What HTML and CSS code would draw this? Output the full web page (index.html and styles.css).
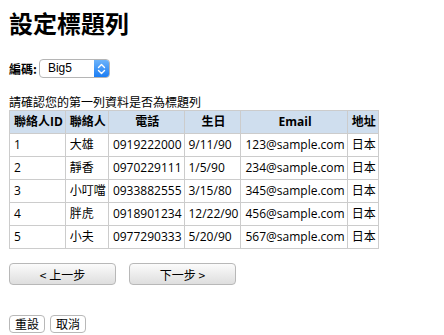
FILE: index.html
```html
<!DOCTYPE html>
<html lang="zh-Hant">
<head>
<meta charset="utf-8">
<link rel="stylesheet" href="styles.css">
</head>
<body>
<h1 class="title">設定標題列</h1>
<div class="enc-row">
  <span class="enc-label">編碼:</span>
  <div class="select">
    <span class="select-value">Big5</span>
    <span class="select-arrow">
      <svg width="9" height="12" viewBox="0 0 9 12"><path d="M1.5 4.5 L4.5 1.5 L7.5 4.5 M1.5 7.5 L4.5 10.5 L7.5 7.5" fill="none" stroke="#fff" stroke-width="1.4" stroke-linecap="round" stroke-linejoin="round"/></svg>
    </span>
  </div>
</div>
<p class="prompt">請確認您的第一列資料是否為標題列</p>
<table class="grid">
  <thead>
    <tr><th>聯絡人ID</th><th>聯絡人</th><th class="c">電話</th><th class="c">生日</th><th class="c">Email</th><th>地址</th></tr>
  </thead>
  <tbody>
    <tr><td>1</td><td>大雄</td><td>0919222000</td><td>9/11/90</td><td>123@sample.com</td><td>日本</td></tr>
    <tr><td>2</td><td>靜香</td><td>0970229111</td><td>1/5/90</td><td>234@sample.com</td><td>日本</td></tr>
    <tr><td>3</td><td>小叮噹</td><td>0933882555</td><td>3/15/80</td><td>345@sample.com</td><td>日本</td></tr>
    <tr><td>4</td><td>胖虎</td><td>0918901234</td><td>12/22/90</td><td>456@sample.com</td><td>日本</td></tr>
    <tr><td>5</td><td>小夫</td><td>0977290333</td><td>5/20/90</td><td>567@sample.com</td><td>日本</td></tr>
  </tbody>
</table>
<div class="nav">
  <button class="btn-big">&lt; 上一步</button>
  <button class="btn-big">下一步 &gt;</button>
</div>
<div class="actions">
  <button class="btn-small">重設</button>
  <button class="btn-small">取消</button>
</div>
</body>
</html>
```
FILE: styles.css
```css
html, body {
  margin: 0;
  background: #fff;
}
body {
  padding: 9px 9px 0 9px;
  font-family: "Noto Sans CJK TC", sans-serif;
  color: #000;
}
.title {
  margin: 0;
  font-size: 24px;
  line-height: 28px;
  font-weight: bold;
}
.enc-row {
  display: flex;
  align-items: center;
  gap: 2px;
  margin-top: 22px;
  height: 19px;
}
.enc-label {
  font-size: 12px;
  font-weight: bold;
}
.select {
  display: flex;
  align-items: stretch;
  width: 71px;
  height: 19px;
  box-sizing: border-box;
  border: 1px solid #b5b5b5;
  border-radius: 4px;
  overflow: hidden;
  background: #fff;
}
.select-value {
  flex: 1;
  font-family: "Liberation Sans", Arial, sans-serif;
  font-size: 12px;
  line-height: 17px;
  padding-left: 8px;
}
.select-arrow {
  width: 15px;
  display: flex;
  align-items: center;
  justify-content: center;
  background: linear-gradient(#6cb3fa, #1b7df4);
}
.prompt {
  margin: 17px 0 0 0;
  font-size: 12px;
  line-height: 14px;
}
.grid {
  border-collapse: collapse;
  margin-top: 1px;
  font-family: "Open Sans", "Noto Sans CJK TC", sans-serif;
  font-size: 12px;
}
.grid th, .grid td {
  border: 1px solid #cccccc;
  padding: 0 2px 0 4px;
  height: 23px;
  box-sizing: border-box;
  line-height: 16px;
  text-align: left;
  white-space: nowrap;
}
.grid th {
  background: #cfdeee;
  font-weight: bold;
}
.grid th.c {
  text-align: center;
}
.nav {
  display: flex;
  gap: 13px;
  margin-top: 14px;
}
.btn-big {
  width: 107px;
  height: 22px;
  border: 1px solid #b8b8b8;
  border-radius: 4px;
  background: linear-gradient(#fbfbfb, #dedede);
  font-family: "Noto Sans CJK TC", sans-serif;
  font-size: 12px;
  padding: 0;
  color: #000;
}
.actions {
  display: flex;
  gap: 5px;
  margin-top: 30px;
}
.btn-small {
  height: 18px;
  padding: 0 5px;
  border: 1px solid #b8b8b8;
  border-radius: 4px;
  background: #fff;
  font-family: "Noto Sans CJK TC", sans-serif;
  font-size: 12px;
  line-height: 16px;
  color: #000;
}
```
